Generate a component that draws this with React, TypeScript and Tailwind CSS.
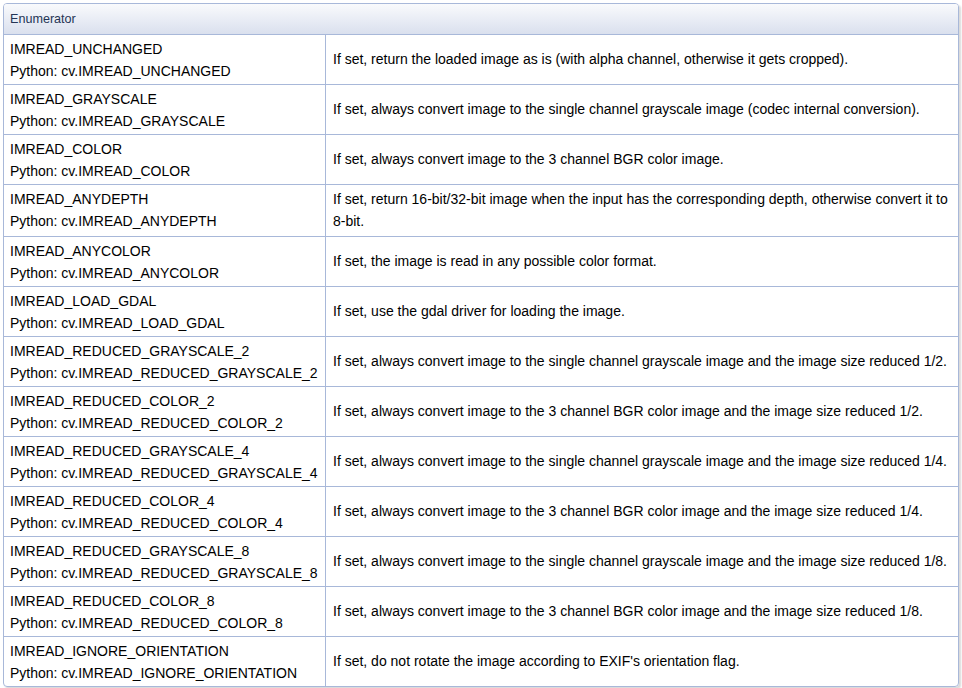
import React from 'react';

interface EnumRow {
  name: string;
  doc: string;
}

const rows: EnumRow[] = [
  { name: 'IMREAD_UNCHANGED', doc: 'If set, return the loaded image as is (with alpha channel, otherwise it gets cropped).' },
  { name: 'IMREAD_GRAYSCALE', doc: 'If set, always convert image to the single channel grayscale image (codec internal conversion).' },
  { name: 'IMREAD_COLOR', doc: 'If set, always convert image to the 3 channel BGR color image.' },
  { name: 'IMREAD_ANYDEPTH', doc: 'If set, return 16-bit/32-bit image when the input has the corresponding depth, otherwise convert it to 8-bit.' },
  { name: 'IMREAD_ANYCOLOR', doc: 'If set, the image is read in any possible color format.' },
  { name: 'IMREAD_LOAD_GDAL', doc: 'If set, use the gdal driver for loading the image.' },
  { name: 'IMREAD_REDUCED_GRAYSCALE_2', doc: 'If set, always convert image to the single channel grayscale image and the image size reduced 1/2.' },
  { name: 'IMREAD_REDUCED_COLOR_2', doc: 'If set, always convert image to the 3 channel BGR color image and the image size reduced 1/2.' },
  { name: 'IMREAD_REDUCED_GRAYSCALE_4', doc: 'If set, always convert image to the single channel grayscale image and the image size reduced 1/4.' },
  { name: 'IMREAD_REDUCED_COLOR_4', doc: 'If set, always convert image to the 3 channel BGR color image and the image size reduced 1/4.' },
  { name: 'IMREAD_REDUCED_GRAYSCALE_8', doc: 'If set, always convert image to the single channel grayscale image and the image size reduced 1/8.' },
  { name: 'IMREAD_REDUCED_COLOR_8', doc: 'If set, always convert image to the 3 channel BGR color image and the image size reduced 1/8.' },
  { name: 'IMREAD_IGNORE_ORIENTATION', doc: "If set, do not rotate the image according to EXIF's orientation flag." },
];

export default function App() {
  return (
    <div className="bg-white w-[962px] h-[688px] pt-[3px] pl-[3px] font-['Liberation_Sans',Arial,sans-serif] text-[14px] text-black">
      <div className="w-[956px] border border-[#A8B8D9] rounded-[4px] shadow-[2px_2px_2px_rgba(0,0,0,0.15)] overflow-hidden">
        <div className="h-[31px] border-b border-[#A8B8D9] bg-gradient-to-b from-[#f9fafc] to-[#dae0ee] flex items-center px-[6px] text-[12.6px] text-[#253555]">
          Enumerator
        </div>
        {rows.map((row, i) => (
          <div
            key={row.name}
            className={`flex ${i < rows.length - 1 ? 'border-b border-[#A8B8D9]' : ''}`}
          >
            <div className="w-[322px] shrink-0 border-r border-[#A8B8D9] pt-[3px] pb-[2px] px-[6px] leading-[22px] whitespace-nowrap">
              <div>{row.name}</div>
              <div>Python: cv.{row.name}</div>
            </div>
            <div className="flex-1 flex items-center pt-[3px] pb-[2px] px-[7px] leading-[22px]">
              <p className="mb-[2px]">{row.doc}</p>
            </div>
          </div>
        ))}
      </div>
    </div>
  );
}
